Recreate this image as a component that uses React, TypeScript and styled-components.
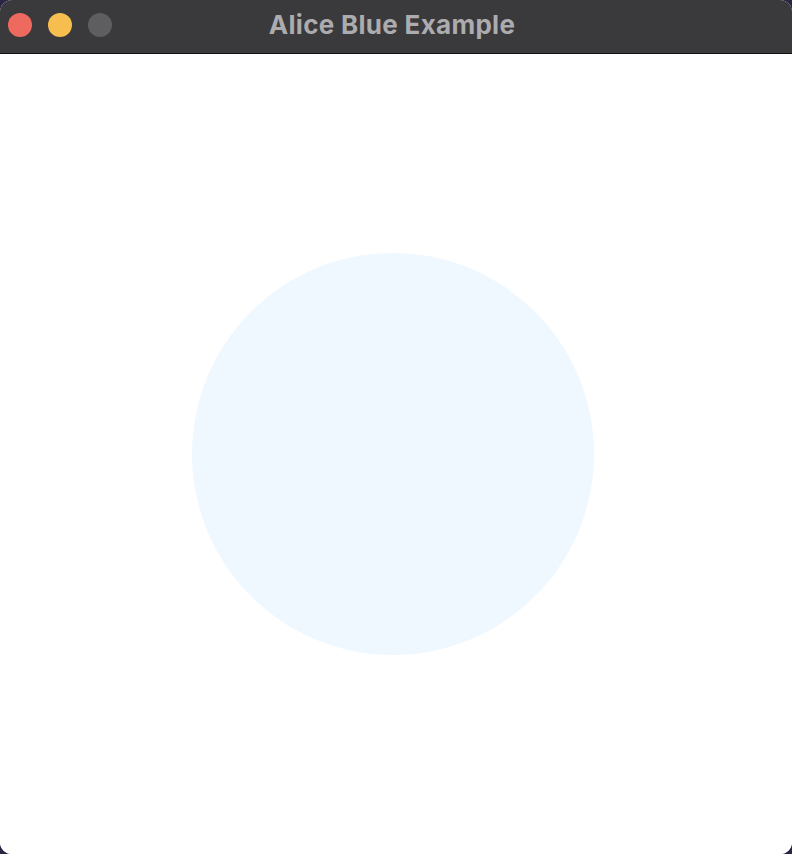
import React from 'react';
import styled, { createGlobalStyle } from 'styled-components';

const GlobalStyle = createGlobalStyle`
  html, body {
    margin: 0;
    padding: 0;
    background: #2b2444;
  }
  #root {
    width: 792px;
    height: 854px;
  }
`;

const Window = styled.div`
  width: 792px;
  height: 854px;
  display: flex;
  flex-direction: column;
  border-radius: 12px;
  overflow: hidden;
  background: #ffffff;
`;

const TitleBar = styled.header`
  position: relative;
  height: 54px;
  flex: none;
  display: flex;
  align-items: center;
  justify-content: center;
  padding: 0 8px 5px 0;
  box-sizing: border-box;
  background: #3a393c;
  border-bottom: 1px solid #111113;
`;

const Lights = styled.div`
  position: absolute;
  left: 8px;
  top: 13px;
  display: flex;
  gap: 16px;
`;

const Light = styled.span<{ $color: string }>`
  width: 24px;
  height: 24px;
  border-radius: 50%;
  background: ${(p) => p.$color};
`;

const Title = styled.h1`
  margin: 0;
  font-family: Inter, 'Liberation Sans', sans-serif;
  font-size: 26px;
  font-weight: 700;
  color: #acabae;
  letter-spacing: 0.3px;
`;

const Canvas = styled.main`
  flex: 1;
  display: flex;
  align-items: center;
  justify-content: center;
  padding-right: 6px;
  background: #ffffff;
`;

const Circle = styled.div`
  width: 402px;
  height: 402px;
  border-radius: 50%;
  background: aliceblue;
`;

export default function App() {
  return (
    <>
      <GlobalStyle />
      <Window>
        <TitleBar>
          <Lights>
            <Light $color="#ee6a5f" />
            <Light $color="#f5be4f" />
            <Light $color="#5e5d60" />
          </Lights>
          <Title>Alice Blue Example</Title>
        </TitleBar>
        <Canvas>
          <Circle />
        </Canvas>
      </Window>
    </>
  );
}
